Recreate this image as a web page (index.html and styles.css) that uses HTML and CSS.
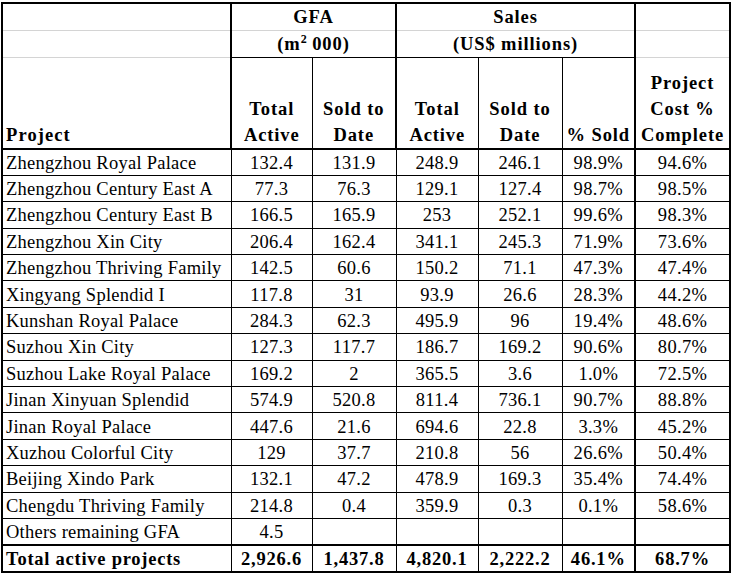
FILE: index.html
```html
<!DOCTYPE html>
<html lang="en">
<head>
<meta charset="utf-8">
<title>Active projects</title>
<link rel="stylesheet" href="styles.css">
</head>
<body>
<div class="sheet">
<table class="grid">
  <colgroup>
    <col class="c-name">
    <col class="c-gfa-total">
    <col class="c-gfa-sold">
    <col class="c-sales-total">
    <col class="c-sales-sold">
    <col class="c-pct">
    <col class="c-cost">
  </colgroup>
  <thead>
    <tr class="h1">
      <th class="blank"></th>
      <th class="group" colspan="2">GFA</th>
      <th class="group" colspan="3">Sales</th>
      <th class="blank last"></th>
    </tr>
    <tr class="h2">
      <th class="blank"></th>
      <th class="group sub" colspan="2">(m<sup>2</sup> 000)</th>
      <th class="group sub" colspan="3">(US$ millions)</th>
      <th class="blank last"></th>
    </tr>
    <tr class="h3">
      <th class="name">Project</th>
      <th class="thin">Total<br>Active</th>
      <th class="thick">Sold to<br>Date</th>
      <th class="thin">Total<br>Active</th>
      <th class="thin">Sold to<br>Date</th>
      <th class="thick">% Sold</th>
      <th class="last">Project<br>Cost %<br>Complete</th>
    </tr>
  </thead>
  <tbody>
    <tr><td class="name">Zhengzhou Royal Palace</td><td class="thin">132.4</td><td class="thick">131.9</td><td class="thin">248.9</td><td class="thin">246.1</td><td class="thick">98.9%</td><td class="last">94.6%</td></tr>
    <tr><td class="name">Zhengzhou Century East A</td><td class="thin">77.3</td><td class="thick">76.3</td><td class="thin">129.1</td><td class="thin">127.4</td><td class="thick">98.7%</td><td class="last">98.5%</td></tr>
    <tr><td class="name">Zhengzhou Century East B</td><td class="thin">166.5</td><td class="thick">165.9</td><td class="thin">253</td><td class="thin">252.1</td><td class="thick">99.6%</td><td class="last">98.3%</td></tr>
    <tr><td class="name">Zhengzhou Xin City</td><td class="thin">206.4</td><td class="thick">162.4</td><td class="thin">341.1</td><td class="thin">245.3</td><td class="thick">71.9%</td><td class="last">73.6%</td></tr>
    <tr><td class="name">Zhengzhou Thriving Family</td><td class="thin">142.5</td><td class="thick">60.6</td><td class="thin">150.2</td><td class="thin">71.1</td><td class="thick">47.3%</td><td class="last">47.4%</td></tr>
    <tr><td class="name">Xingyang Splendid I</td><td class="thin">117.8</td><td class="thick">31</td><td class="thin">93.9</td><td class="thin">26.6</td><td class="thick">28.3%</td><td class="last">44.2%</td></tr>
    <tr><td class="name">Kunshan Royal Palace</td><td class="thin">284.3</td><td class="thick">62.3</td><td class="thin">495.9</td><td class="thin">96</td><td class="thick">19.4%</td><td class="last">48.6%</td></tr>
    <tr><td class="name">Suzhou Xin City</td><td class="thin">127.3</td><td class="thick">117.7</td><td class="thin">186.7</td><td class="thin">169.2</td><td class="thick">90.6%</td><td class="last">80.7%</td></tr>
    <tr><td class="name">Suzhou Lake Royal Palace</td><td class="thin">169.2</td><td class="thick">2</td><td class="thin">365.5</td><td class="thin">3.6</td><td class="thick">1.0%</td><td class="last">72.5%</td></tr>
    <tr><td class="name">Jinan Xinyuan Splendid</td><td class="thin">574.9</td><td class="thick">520.8</td><td class="thin">811.4</td><td class="thin">736.1</td><td class="thick">90.7%</td><td class="last">88.8%</td></tr>
    <tr><td class="name">Jinan Royal Palace</td><td class="thin">447.6</td><td class="thick">21.6</td><td class="thin">694.6</td><td class="thin">22.8</td><td class="thick">3.3%</td><td class="last">45.2%</td></tr>
    <tr><td class="name">Xuzhou Colorful City</td><td class="thin">129</td><td class="thick">37.7</td><td class="thin">210.8</td><td class="thin">56</td><td class="thick">26.6%</td><td class="last">50.4%</td></tr>
    <tr><td class="name">Beijing Xindo Park</td><td class="thin">132.1</td><td class="thick">47.2</td><td class="thin">478.9</td><td class="thin">169.3</td><td class="thick">35.4%</td><td class="last">74.4%</td></tr>
    <tr><td class="name">Chengdu Thriving Family</td><td class="thin">214.8</td><td class="thick">0.4</td><td class="thin">359.9</td><td class="thin">0.3</td><td class="thick">0.1%</td><td class="last">58.6%</td></tr>
    <tr><td class="name">Others remaining GFA</td><td class="thin">4.5</td><td class="thick"></td><td class="thin"></td><td class="thin"></td><td class="thick"></td><td class="last"></td></tr>
  </tbody>
  <tfoot>
    <tr class="total"><td class="name">Total active projects</td><td class="thin">2,926.6</td><td class="thick">1,437.8</td><td class="thin">4,820.1</td><td class="thin">2,222.2</td><td class="thick">46.1%</td><td class="last">68.7%</td></tr>
  </tfoot>
</table>
</div>
</body>
</html>
```

FILE: styles.css
```css
html, body {
  margin: 0;
  padding: 0;
  background: #ffffff;
}

.sheet {
  padding: 2px 0 0 1px;
}

.grid {
  border-collapse: collapse;
  table-layout: fixed;
  width: 730px;
  font-family: "Liberation Serif", "Times New Roman", serif;
  color: #000;
  border: 2px solid #000;
}

.c-name { width: 229px; }
.c-gfa-total { width: 81px; }
.c-gfa-sold { width: 84px; }
.c-sales-total { width: 82px; }
.c-sales-sold { width: 84px; }
.c-pct { width: 73px; }
.c-cost { width: 95px; }

th, td {
  padding: 0 3px;
  font-size: 18.5px;
  white-space: nowrap;
  overflow: hidden;
}

th {
  font-weight: bold;
  letter-spacing: 0.9px;
  text-align: center;
  line-height: 26px;
}

td {
  text-align: center;
  letter-spacing: 0.3px;
  line-height: 20px;
  border-bottom: 1px solid #000;
  vertical-align: middle;
  padding-top: 1px;
}

/* header */
.h1 th { height: 26px; vertical-align: middle; border-bottom: 1px solid #d4d4d4; }
.h2 th { height: 26px; vertical-align: middle; }
.h2 th.group { border-bottom: 1px solid #000; }
.h2 th.blank { border-bottom: 1px solid #d4d4d4; }
.h3 th { height: 90px; vertical-align: bottom; padding-bottom: 0; border-bottom: 2px solid #000; }

th.group { border-left: 2px solid #000; border-right: 2px solid #000; }
th.sub sup { font-size: 12px; line-height: 0; vertical-align: 7px; letter-spacing: 0; }

th.name, td.name { text-align: left; padding-left: 3px; }
th.name { letter-spacing: 1.1px; }
td.name { letter-spacing: 0.25px; }

td.thick, th.thick, .h3 th.thin, tbody td.thin, tfoot td.thin { border-left: 1px solid #000; }
.h3 th:nth-child(2), td:nth-child(2),
.h3 th:nth-child(4), td:nth-child(4),
.h3 th.last, td.last { border-left: 2px solid #000; }

tbody tr { height: 26.4px; }

.total { height: 27px; }
.total td {
  font-weight: bold;
  letter-spacing: 0.8px;
  border-top: 2px solid #000;
  border-bottom: 2px solid #000;
}
.total td.name { letter-spacing: 0.75px; }
```
